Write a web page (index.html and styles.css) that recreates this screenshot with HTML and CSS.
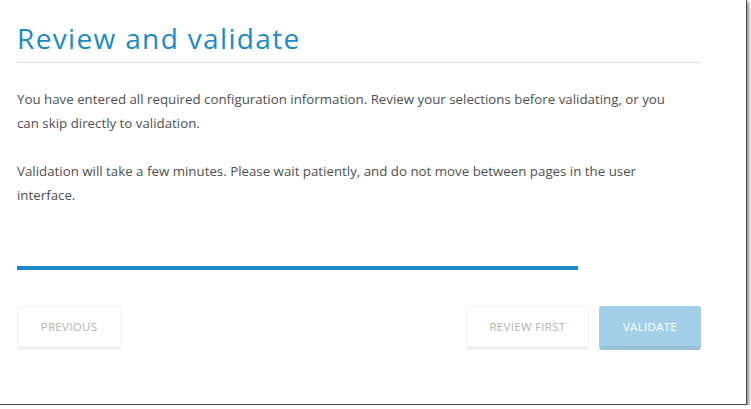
FILE: index.html
```html
<!DOCTYPE html>
<html lang="en">
<head>
  <meta charset="UTF-8" />
  <meta name="viewport" content="width=device-width, initial-scale=1.0" />
  <title>Review and validate</title>
  <link rel="stylesheet" href="styles.css">
</head>
<body>
  <div class="frame">
    <div class="page">
      <h1 class="title">Review and validate</h1>
      <p class="text">You have entered all required configuration information. Review your selections before validating, or you can skip directly to validation.</p>
      <p class="text">Validation will take a few minutes. Please wait patiently, and do not move between pages in the user interface.</p>
      <div class="progress">
        <div class="progress-fill" style="width: 82%;"></div>
      </div>
      <div class="actions">
        <button class="btn">Previous</button>
        <div class="actions-right">
          <button class="btn btn-wide">Review first</button>
          <button class="btn btn-primary">Validate</button>
        </div>
      </div>
    </div>
  </div>
</body>
</html>
```

FILE: styles.css
```css
body {
  margin: 0;
  background-color: #fff;
  font-family: "Open Sans", "Noto Sans", sans-serif;
}
.frame {
  width: 746px;
  height: 404px;
  box-sizing: content-box;
  border-right: 1px solid #4a4a4a;
  border-bottom: 1px solid #4a4a4a;
  box-shadow: 2px 2px 3px rgba(0, 0, 0, 0.45);
  background-color: #fff;
  overflow: hidden;
}
.page {
  width: 684px;
  padding: 19px 0 0 17px;
}
.title {
  margin: 0;
  padding-bottom: 5px;
  border-bottom: 1px solid #ddd;
  font-size: 28px;
  font-weight: 400;
  line-height: 38px;
  letter-spacing: 1.35px;
  color: #1b8ac6;
}
.text {
  max-width: 672px;
  margin: 24px 0 0 0;
  font-size: 13.3px;
  line-height: 24px;
  color: #505050;
}
.progress {
  height: 4px;
  margin-top: 59px;
}
.progress-fill {
  height: 100%;
  background-color: #1a89c7;
}
.actions {
  display: flex;
  justify-content: space-between;
  margin-top: 36px;
}
.actions-right {
  display: flex;
  gap: 10px;
}
.btn {
  width: 104px;
  height: 44px;
  box-sizing: border-box;
  border: 1px solid #f2f2f2;
  border-bottom: 4px solid #f2f2f2;
  border-radius: 3px;
  background-color: #fff;
  color: #b3b3b3;
  font-family: "Open Sans", "Noto Sans", sans-serif;
  font-size: 11.5px;
  letter-spacing: 0.3px;
  text-transform: uppercase;
  padding: 0 0 1px 0;
}
.btn-wide {
  width: 123px;
}
.btn-primary {
  width: 102px;
  background-color: #a3d0e8;
  border-color: #a3d0e8;
  border-bottom-color: #98c1d8;
  color: #fff;
}
```
